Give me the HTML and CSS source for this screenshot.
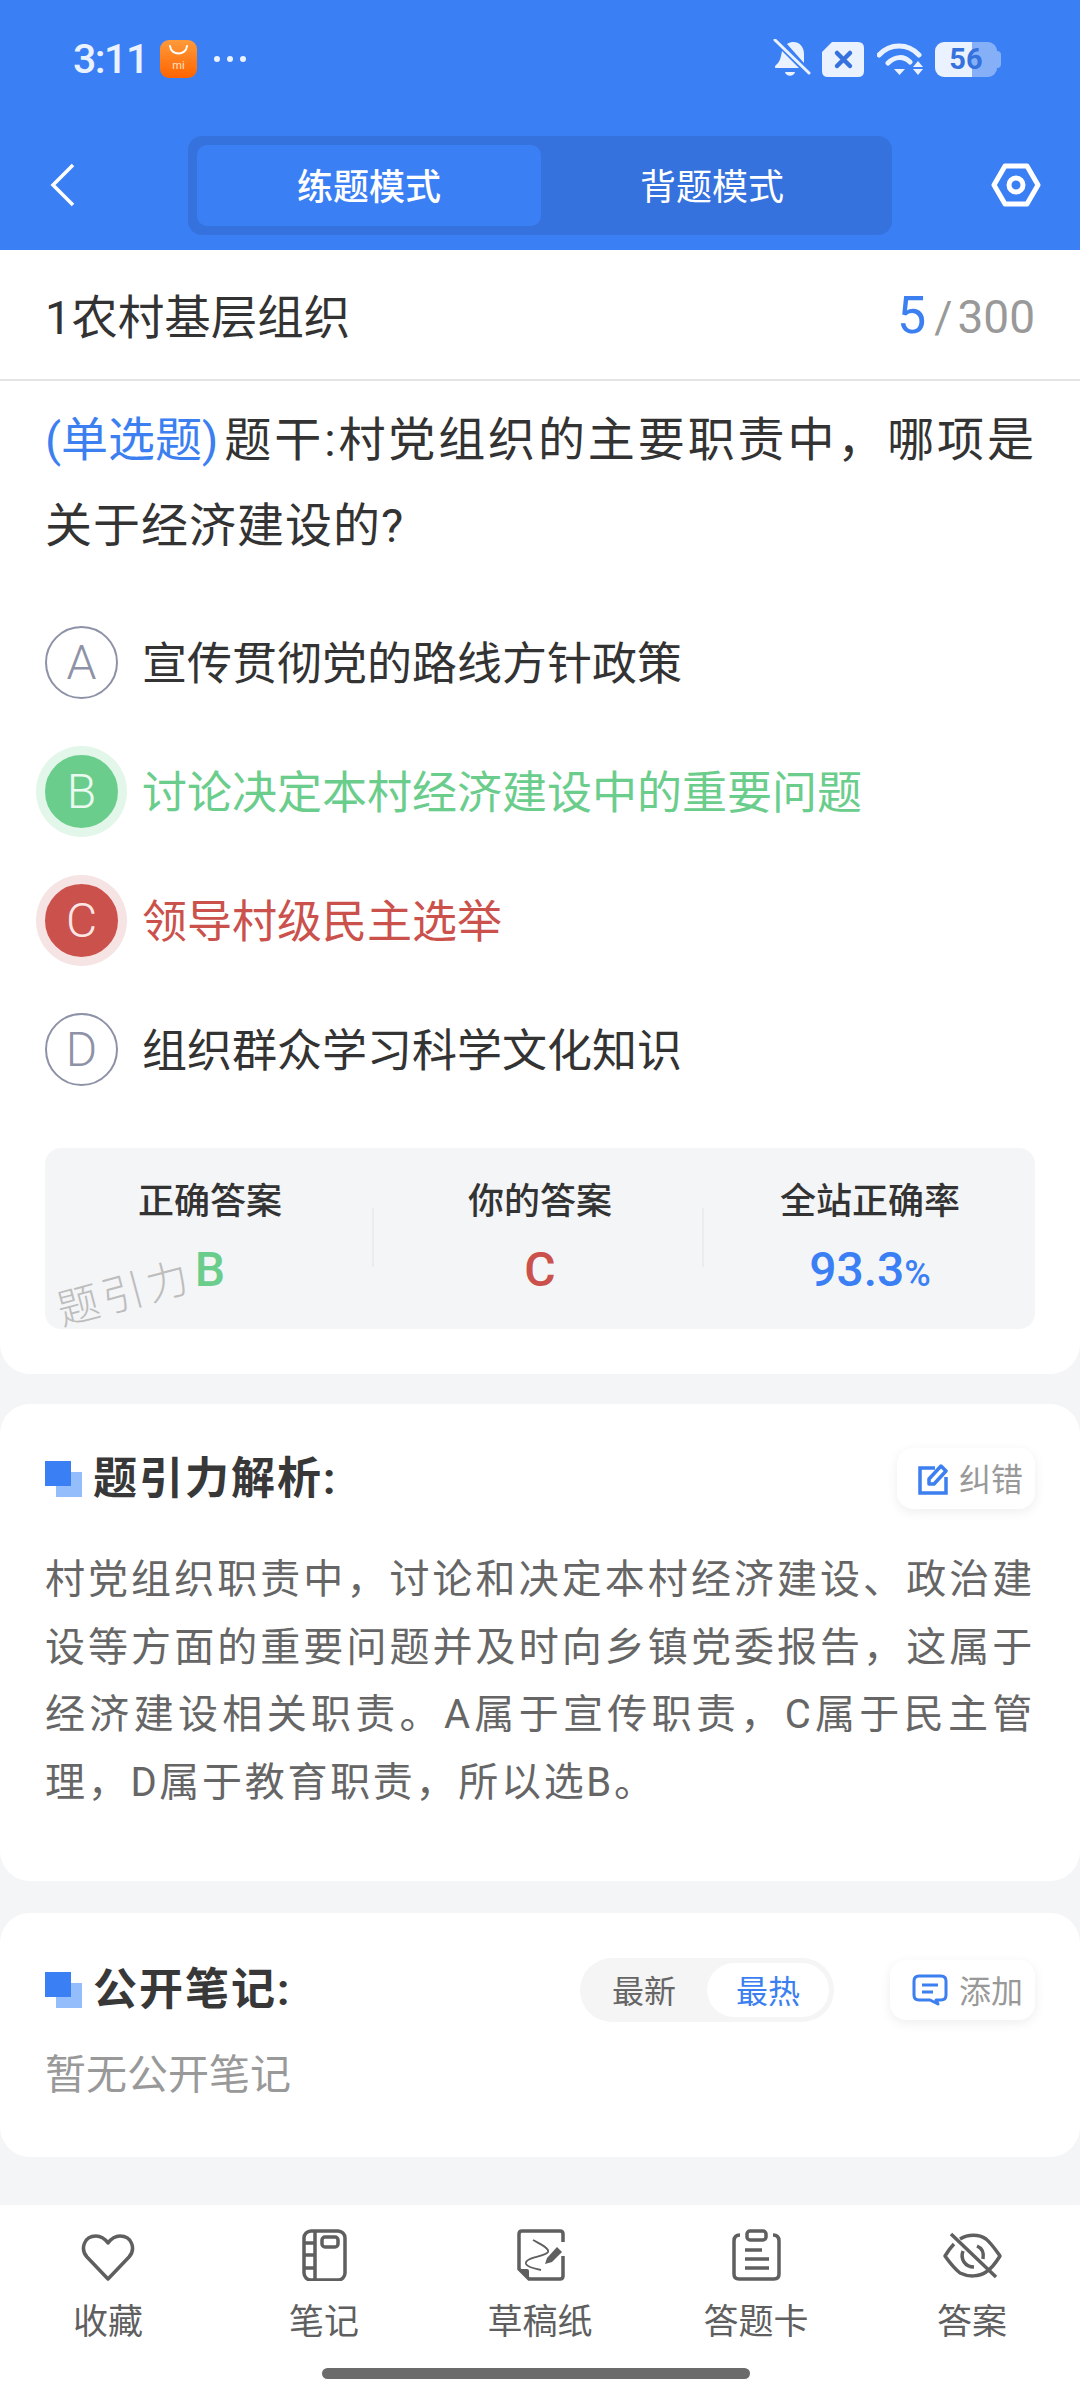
FILE: index.html
```html
<!DOCTYPE html>
<html lang="zh-CN">
  <head>
    <meta charset="UTF-8" />
    <meta name="viewport" content="width=device-width, initial-scale=1.0" />
    <title>题引力 - 练题模式</title>
    <link rel="stylesheet" href="styles.css">
  </head>
  <body>
    <div class="appbar">
      <div class="statusbar">
        <span class="time">3:11</span>
        <svg class="app-icon" viewBox="0 0 37 38">
          <defs>
            <linearGradient id="shopGrad" x1="0" y1="0" x2="0" y2="1">
              <stop offset="0" stop-color="#ff9a3a" />
              <stop offset="1" stop-color="#ff6400" />
            </linearGradient>
          </defs>
          <rect width="37" height="38" rx="9" fill="url(#shopGrad)" />
          <path d="M10 6 C11 16 26 16 27 6" fill="none" stroke="#fff" stroke-width="2" stroke-linecap="round" />
          <text x="18.5" y="29" class="app-icon-text">mi</text>
        </svg>
        <div class="dots"><i></i><i></i><i></i></div>
        <div class="status-right">
          <svg class="ic-bell" viewBox="0 0 38 40">
            <path d="M9 12 L26 29 H3 C1.500 29 1.500 27 3 26 C7 23 8 18 9 12Z M14 5 C22 0 31 5 31 15 V24Z M12 33 H22 C21 38 13 38 12 33Z" fill="#eaf2ff" />
            <path d="M2 1 L36 34" stroke="#eaf2ff" stroke-width="3" stroke-linecap="round" />
          </svg>
          <svg class="ic-sim" viewBox="0 0 42 35">
            <path d="M10 0 H36 Q42 0 42 6 V29 Q42 35 36 35 H6 Q0 35 0 29 V10Z" fill="#eaf2ff" />
            <path d="M15 11 L28 24 M28 11 L15 24" stroke="#3572dd" stroke-width="4.500" stroke-linecap="round" />
          </svg>
          <svg class="ic-wifi" viewBox="0 0 47 36">
            <path d="M2 14 C13 2 31 2 42 14 M11 22 C18 15 27 15 33 21" fill="none" stroke="#eaf2ff" stroke-width="5" stroke-linecap="round" />
            <path d="M17 28 H28 L22.500 34Z M41 20 L46 26 H36Z M36 28 H46 L41 34Z" fill="#eaf2ff" />
          </svg>
          <div class="battery"><span>56</span></div>
        </div>
      </div>
      <div class="navbar">
        <svg class="back" viewBox="0 0 26 44">
          <path d="M23 2 L3 22 L23 42" fill="none" stroke="#fff" stroke-width="3.500" />
        </svg>
        <div class="mode-tabs">
          <div class="mode-tab active">练题模式</div>
          <div class="mode-tab">背题模式</div>
        </div>
        <svg class="setting" viewBox="0 0 50 44">
          <path d="M14 3 H36 L47 22 L36 41 H14 L3 22Z" fill="none" stroke="#fff" stroke-width="5" stroke-linejoin="round" />
          <circle cx="25" cy="22" r="7" fill="none" stroke="#fff" stroke-width="5" />
        </svg>
      </div>
    </div>

    <div class="card card-question">
      <div class="title-row">
        <div class="chapter">1农村基层组织</div>
        <div class="counter"><span class="current">5</span><span class="slash">/</span><span class="total">300</span></div>
      </div>
      <div class="question"><span class="qtype">(单选题)</span>题干:村党组织的主要职责中，哪项是关于经济建设的?</div>
      <div class="options">
        <div class="option">
          <div class="letter">A</div>
          <div class="option-text">宣传贯彻党的路线方针政策</div>
        </div>
        <div class="option right">
          <div class="letter">B</div>
          <div class="option-text">讨论决定本村经济建设中的重要问题</div>
        </div>
        <div class="option wrong">
          <div class="letter">C</div>
          <div class="option-text">领导村级民主选举</div>
        </div>
        <div class="option">
          <div class="letter">D</div>
          <div class="option-text">组织群众学习科学文化知识</div>
        </div>
      </div>
      <div class="stats">
        <div class="stat">
          <div class="stat-label">正确答案</div>
          <div class="stat-value green">B</div>
        </div>
        <div class="stat">
          <div class="stat-label">你的答案</div>
          <div class="stat-value red">C</div>
        </div>
        <div class="stat">
          <div class="stat-label">全站正确率</div>
          <div class="stat-value blue">93.3<small>%</small></div>
        </div>
        <div class="watermark">题引力</div>
      </div>
    </div>

    <div class="card card-analysis">
      <div class="section-head">
        <div class="section-mark"><i></i><b></b></div>
        <div class="section-title">题引力解析:</div>
        <div class="chip chip-fix">
          <svg class="chip-edit" viewBox="0 0 30 32">
            <path d="M17 5 H2 V30 H28 V14" fill="none" stroke="#3b7ff0" stroke-width="3.500" />
            <path d="M11 16 L23 3 L28 8 L16 21 H11Z" fill="none" stroke="#3b7ff0" stroke-width="3.500" stroke-linejoin="round" />
          </svg>
          <span>纠错</span>
        </div>
      </div>
      <div class="analysis-text">村党组织职责中，讨论和决定本村经济建设、政治建设等方面的重要问题并及时向乡镇党委报告，这属于经济建设相关职责。A属于宣传职责，C属于民主管理，D属于教育职责，所以选B。</div>
    </div>

    <div class="card card-notes">
      <div class="section-head">
        <div class="section-mark"><i></i><b></b></div>
        <div class="section-title">公开笔记:</div>
        <div class="sort">
          <div class="sort-item">最新</div>
          <div class="sort-item active">最热</div>
        </div>
        <div class="chip chip-add">
          <svg class="chip-comment" viewBox="0 0 36 32">
            <path d="M7 2 H29 Q34 2 34 7 V21 Q34 26 29 26 H24 L26 30 L18 26 H7 Q2 26 2 21 V7 Q2 2 7 2Z" fill="none" stroke="#3b7ff0" stroke-width="3" stroke-linejoin="round" />
            <path d="M10 11 H26 M10 18 H21" stroke="#3b7ff0" stroke-width="3" />
          </svg>
          <span>添加</span>
        </div>
      </div>
      <div class="empty">暂无公开笔记</div>
    </div>

    <div class="bottom">
      <div class="tabs">
        <div class="tab">
          <svg viewBox="0 0 216 52">
            <path d="M108 50 L87 28 C80 20 84 7 96 7 C101 7 105 10 108 14 C111 10 115 7 120 7 C132 7 136 20 129 28Z" class="line" />
          </svg>
          <span>收藏</span>
        </div>
        <div class="tab">
          <svg viewBox="0 0 216 52">
            <rect x="88" y="2" width="41" height="49" rx="7" class="line" />
            <path d="M99 2 V51 M88 14 H99 M88 26 H99 M88 39 H99" class="line" />
            <rect x="106" y="8" width="16" height="10" rx="3" class="line" />
          </svg>
          <span>笔记</span>
        </div>
        <div class="tab">
          <svg viewBox="0 0 216 52">
            <path d="M131 13 V5 Q131 2 128 2 H90 Q87 2 87 5 V40 L97 50 H128 Q131 50 131 47 V27" class="line" />
            <path d="M87 40 H95 Q97 40 97 42 V50Z" fill="#5f5f5f" />
            <path d="M101 11 C106 14 118 19 116 23 C113 28 92 28 94 35 C95 38 104 40 109 41" fill="none" stroke="#5f5f5f" stroke-width="1.800" />
            <path d="M113 35 L115 29 L125 18 L130 23 L120 33Z" fill="#5f5f5f" />
          </svg>
          <span>草稿纸</span>
        </div>
        <div class="tab">
          <svg viewBox="0 0 216 52">
            <path d="M92 6 Q86 6 86 12 V45 Q86 50 91 50 H126 Q131 50 131 45 V12 Q131 6 125 6" class="line" />
            <rect x="99" y="2" width="19" height="9" rx="3" class="line" />
            <path d="M97 21 H114 M97 30 H121 M97 39 H121" class="line" />
          </svg>
          <span>答题卡</span>
        </div>
        <div class="tab">
          <svg viewBox="0 0 216 52">
            <path d="M96 10 C104 5 115 5 122 10 C127 14 131 20 136 27 C131 35 127 40 122 43 C115 48 104 48 96 44 C91 40 86 34 81 27 C84 22 87 18 90 15" class="line" />
            <path d="M99 22 C96 30 101 38 110 38 M113 17 C118 19 120 24 119 30" class="line" />
            <path d="M87 5 L132 48" class="line" />
          </svg>
          <span>答案</span>
        </div>
      </div>
      <div class="home-bar"></div>
    </div>
  </body>
</html>
```

FILE: styles.css
```css
:root {
  --blue-color: #3b7ff5;
  --blue-dark-color: #3572dd;
  --blue-text-color: #3b7ff0;
  --green-color: #6bcd8c;
  --red-color: #cb514c;
  --text-color: #333333;
  --grey-color: #999999;
  --page-color: #f4f5f7;
}

* {
  box-sizing: border-box;
}

body {
  margin: 0;
  width: 1080px;
  height: 2400px;
  overflow: hidden;
  display: flex;
  flex-direction: column;
  background-color: var(--page-color);
  color: var(--text-color);
  font-family: Roboto, "Noto Sans CJK SC", sans-serif;
}

.appbar {
  height: 250px;
  background-color: var(--blue-color);
}

.statusbar {
  height: 120px;
  padding: 0 83px 2px 73px;
  display: flex;
  align-items: center;
}

.time {
  font-size: 41px;
  font-weight: 500;
  letter-spacing: -1.500px;
  color: #eaf2ff;
  width: 87px;
}

.app-icon {
  width: 37px;
  height: 38px;
}

.app-icon-text {
  font-size: 11px;
  fill: #ffe3c8;
  text-anchor: middle;
}

.dots {
  display: flex;
  gap: 7px;
  margin-left: 17px;
}

.dots i {
  width: 6px;
  height: 6px;
  border-radius: 50%;
  background-color: #eaf2ff;
}

.status-right {
  margin-left: auto;
  display: flex;
  align-items: center;
}

.ic-bell {
  width: 38px;
  height: 40px;
  margin-right: 11px;
}

.ic-sim {
  width: 42px;
  height: 35px;
  margin-right: 13px;
}

.ic-wifi {
  width: 47px;
  height: 36px;
  margin-right: 11px;
}

.battery {
  position: relative;
  width: 62px;
  height: 35px;
  border-radius: 9px;
  background: linear-gradient(90deg, #eaf2ff 60%, #85b0f8 60%);
  display: flex;
  align-items: center;
  justify-content: center;
  font-size: 29px;
  font-weight: 700;
  color: var(--blue-dark-color);
}

.battery::after {
  content: "";
  position: absolute;
  right: -4px;
  top: 9px;
  width: 4px;
  height: 17px;
  border-radius: 0 4px 4px 0;
  background-color: #85b0f8;
}

.navbar {
  height: 130px;
  padding: 0 39px 0 50px;
  display: flex;
  align-items: center;
  justify-content: space-between;
}

.back {
  width: 26px;
  height: 44px;
}

.mode-tabs {
  width: 704px;
  height: 99px;
  margin-left: 112px;
  padding: 9px;
  border-radius: 14px;
  background-color: var(--blue-dark-color);
  display: flex;
}

.mode-tab {
  width: 344px;
  padding-bottom: 2px;
  border-radius: 10px;
  display: flex;
  align-items: center;
  justify-content: center;
  color: #fff;
  font-size: 36px;
}

.mode-tab.active {
  background-color: var(--blue-color);
  font-weight: 500;
}

.mode-tab + .mode-tab {
  flex: 1;
}

.setting {
  width: 50px;
  height: 44px;
  margin-left: auto;
}

.card {
  background-color: #fff;
  border-radius: 30px;
}

.card-question {
  height: 1124px;
  border-radius: 0 0 30px 30px;
}

.title-row {
  height: 131px;
  padding: 0 45px;
  border-bottom: 2px solid #e4e4e4;
  display: flex;
  align-items: center;
  justify-content: space-between;
}

.chapter {
  font-size: 46.500px;
  padding-bottom: 3px;
}

.counter {
  display: flex;
  align-items: baseline;
  padding-top: 2px;
  color: var(--grey-color);
}

.current {
  font-size: 52px;
  color: var(--blue-text-color);
  margin-right: 8px;
}

.slash {
  font-size: 44px;
  margin-right: 5px;
}

.total {
  font-size: 46px;
}

.question {
  margin-top: 16px;
  padding: 0 45px;
  font-size: 47px;
  line-height: 86px;
  letter-spacing: 1px;
  text-align: justify;
}

.qtype {
  display: inline-block;
  margin-right: 4px;
  letter-spacing: 0;
  color: var(--blue-text-color);
}

.options {
  margin-top: 29px;
  padding: 0 45px;
}

.option {
  height: 129px;
  display: flex;
  align-items: center;
  gap: 24px;
  font-size: 45px;
}

.option-text {
  padding-bottom: 4px;
}

.letter {
  width: 73px;
  height: 73px;
  border-radius: 50%;
  border: 2px solid #8e92a6;
  color: #8e92a6;
  font-size: 48px;
  font-weight: 300;
  display: flex;
  align-items: center;
  justify-content: center;
}

.option.right {
  color: var(--green-color);
}

.option.right .letter {
  background-color: var(--green-color);
  border-color: var(--green-color);
  color: #eafaf0;
  box-shadow: 0 0 0 9px #e3f6ea;
}

.option.wrong {
  color: var(--red-color);
}

.option.wrong .letter {
  background-color: var(--red-color);
  border-color: var(--red-color);
  color: #fae6e5;
  box-shadow: 0 0 0 9px #f6e3e3;
}

.stats {
  position: relative;
  height: 181px;
  margin: 34px 45px 0;
  border-radius: 16px;
  background-color: var(--page-color);
  display: grid;
  grid-template-columns: repeat(3, 1fr);
}

.stat {
  position: relative;
  text-align: center;
  padding-top: 30px;
}

.stat + .stat::before {
  content: "";
  position: absolute;
  left: -3px;
  top: 60px;
  height: 59px;
  width: 2px;
  background-color: #ebecef;
}

.stat-label {
  font-size: 36px;
  font-weight: 500;
  line-height: 48px;
}

.stat-value {
  margin-top: 13px;
  font-size: 48px;
  font-weight: 500;
  line-height: 62px;
}

.stat-value small {
  font-size: 36px;
}

.green {
  color: var(--green-color);
}

.red {
  color: var(--red-color);
}

.blue {
  color: var(--blue-color);
}

.watermark {
  position: absolute;
  left: 11px;
  bottom: 11px;
  font-size: 42px;
  font-weight: 300;
  line-height: 48px;
  color: #bdbdbd;
  letter-spacing: 4px;
  transform: rotate(-15deg);
}

.card-analysis {
  height: 477px;
  margin-top: 30px;
  padding: 44px 45px 0;
}

.card-notes {
  height: 244px;
  margin-top: 32px;
  padding: 45px 45px 0;
}

.section-head {
  display: flex;
  align-items: center;
}

.section-mark {
  position: relative;
  width: 37px;
  height: 36px;
  margin-right: 11px;
}

.section-mark i,
.section-mark b {
  position: absolute;
  width: 26px;
  height: 25px;
}

.section-mark i {
  right: 0;
  bottom: 0;
  background-color: #93bdfb;
}

.section-mark b {
  left: 0;
  top: 0;
  background-color: var(--blue-color);
}

.section-title {
  font-size: 44px;
  font-weight: 700;
  line-height: 50px;
  letter-spacing: 2px;
  color: #383838;
}

.chip {
  margin-left: auto;
  height: 61px;
  border-radius: 16px;
  background-color: #fff;
  box-shadow: 0 3px 12px rgba(0, 0, 0, 0.07);
  display: flex;
  align-items: center;
  gap: 11px;
  font-size: 32px;
  color: var(--grey-color);
}

.chip span {
  padding-bottom: 3px;
}

.chip-fix {
  width: 138px;
  padding-left: 21px;
}

.chip-edit {
  width: 30px;
  height: 32px;
}

.chip-add {
  margin-left: 56px;
  height: 60px;
  width: 145px;
  padding-left: 22px;
}

.chip-comment {
  width: 36px;
  height: 32px;
}

.analysis-text {
  margin-top: 37px;
  font-size: 40px;
  line-height: 67.500px;
  letter-spacing: 2.700px;
  color: #666666;
  text-align: justify;
}

.sort {
  margin-left: auto;
  width: 254px;
  height: 64px;
  padding: 5px;
  border-radius: 32px;
  background-color: #f5f5f5;
  display: flex;
  font-size: 32px;
  color: #666666;
}

.sort-item {
  flex: 1;
  display: flex;
  align-items: center;
  justify-content: center;
  padding: 0 4px 2px 0;
}

.sort-item.active {
  flex: none;
  width: 122px;
  padding: 0 0 2px;
  border-radius: 27px;
  background-color: #fff;
  color: var(--blue-text-color);
}

.empty {
  margin-top: 23px;
  font-size: 41px;
  line-height: 60px;
  color: var(--grey-color);
}

.bottom {
  margin-top: auto;
  height: 195px;
  background-color: #fff;
  padding-top: 24px;
}

.tabs {
  display: flex;
}

.tab {
  width: 216px;
  display: flex;
  flex-direction: column;
  align-items: center;
  font-size: 35px;
  line-height: 44px;
  color: #5f5f5f;
}

.tab svg {
  width: 216px;
  height: 52px;
  margin-bottom: 20px;
}

.line {
  fill: none;
  stroke: #5f5f5f;
  stroke-width: 3.500;
  stroke-linejoin: round;
}

.home-bar {
  width: 428px;
  height: 11px;
  margin: 23px 0 0 322px;
  border-radius: 6px;
  background-color: #6b6b6b;
}
```
